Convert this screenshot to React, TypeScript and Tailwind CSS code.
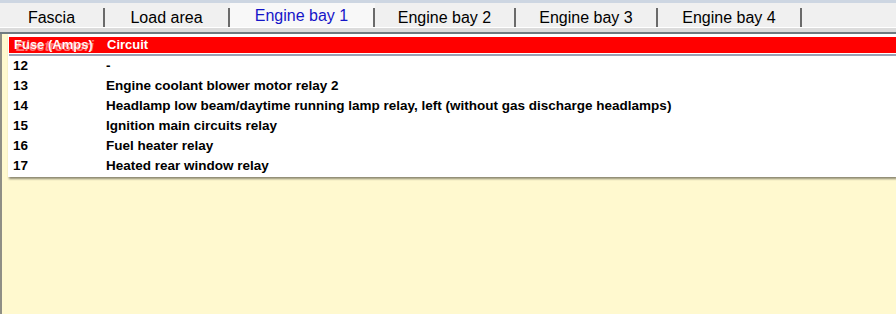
import React from 'react';

interface Tab { label: string; width: number; active?: boolean; }
interface Row { fuse: string; circuit: string; }

const tabs: Tab[] = [
  { label: 'Fascia', width: 105 },
  { label: 'Load area', width: 125 },
  { label: 'Engine bay 1', width: 145, active: true },
  { label: 'Engine bay 2', width: 141 },
  { label: 'Engine bay 3', width: 142 },
  { label: 'Engine bay 4', width: 144 },
];

const rows: Row[] = [
  { fuse: '12', circuit: '-' },
  { fuse: '13', circuit: 'Engine coolant blower motor relay 2' },
  { fuse: '14', circuit: 'Headlamp low beam/daytime running lamp relay, left (without gas discharge headlamps)' },
  { fuse: '15', circuit: 'Ignition main circuits relay' },
  { fuse: '16', circuit: 'Fuel heater relay' },
  { fuse: '17', circuit: 'Heated rear window relay' },
];

export default function App() {
  return (
    <div className="w-[896px] h-[314px] overflow-hidden bg-[#fff9cf] flex flex-col" style={{ fontFamily: '"Liberation Sans", Arial, sans-serif' }}>
      {/* --- Tabs --- */}
      <div className="h-[3px] bg-[#cdd6e2] flex-shrink-0" />
      <div className="h-[24px] bg-[#f0f0f0] flex items-stretch flex-shrink-0">
        {tabs.map((tab) => (
          <div key={tab.label} style={{ width: tab.width }} className={`flex ${tab.active ? 'bg-[#f8f8f8]' : ''}`}>
            <div className={`flex-1 flex items-center justify-center text-[16px] leading-none ${tab.active ? 'text-[#1515c8] pt-[2px]' : 'text-black pt-[6px]'}`}>
              {tab.label}
            </div>
            <div className="w-[2px] h-[19px] self-end bg-[#6a6a6a]" />
          </div>
        ))}
      </div>
      <div className="h-[1px] bg-white flex-shrink-0" />
      <div className="h-[4px] bg-[#dcdcdc] flex-shrink-0" />
      <div className="h-[2px] bg-[#6f7a80] flex-shrink-0" />

      {/* --- Content --- */}
      <div className="flex-1 flex border-l-2 border-[#8f8f86]">
        <div className="ml-[6px] flex-1 self-start bg-white shadow-[1px_2px_2px_rgba(0,0,0,0.45)]">
          <div className="pt-[3px] pl-[1px]">
            <div className="relative h-[16px] bg-[#ff0000] flex items-center text-white font-bold text-[13px]">
              <span className="w-[98px] pl-[5px]">Fuse (Amps)</span>
              <span>Circuit</span>
              <span className="absolute left-[7px] top-[-1px] italic text-[14px] text-[#ffc8c8]/60">Electrostori</span>
            </div>
            <div className="h-[1px] bg-white" />
            <div className="h-[2px] bg-[#9aa0b4]" />
          </div>
          <div className="pb-[1px]">
            {rows.map((row) => (
              <div key={row.fuse} className="h-[20px] flex items-center text-[13.5px] font-bold text-black">
                <span className="w-[98px] pl-[5px]">{row.fuse}</span>
                <span>{row.circuit}</span>
              </div>
            ))}
          </div>
        </div>
      </div>
    </div>
  );
}
